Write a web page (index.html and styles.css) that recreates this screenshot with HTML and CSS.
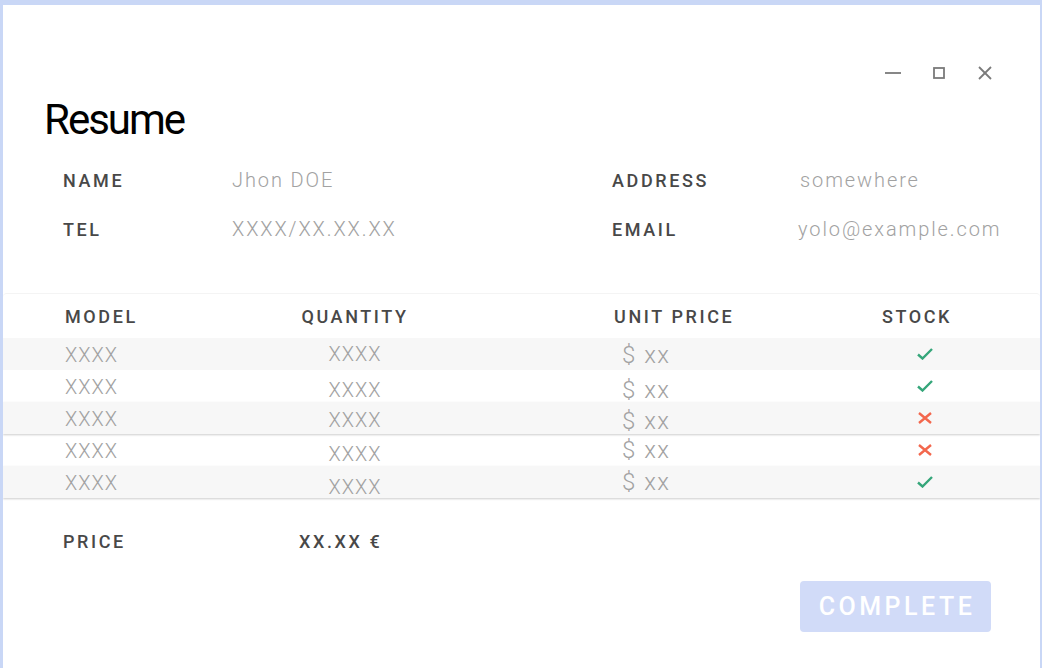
FILE: index.html
```html
<!DOCTYPE html>
<html lang="en">
<head>
  <meta charset="UTF-8">
  <meta name="viewport" content="width=device-width, initial-scale=1.0">
  <title>Resume</title>
  <link rel="stylesheet" href="styles.css">
</head>
<body>
  <div class="card">
    <!-- Window controls -->
    <div class="controls">
      <svg class="ctrl" viewBox="0 0 24 24"><line x1="4" y1="12" x2="20" y2="12" /></svg>
      <svg class="ctrl" viewBox="0 0 24 24"><rect x="7" y="7" width="10" height="10" /></svg>
      <svg class="ctrl" viewBox="0 0 24 24"><line x1="6" y1="6" x2="18" y2="18" /><line x1="18" y1="6" x2="6" y2="18" /></svg>
    </div>

    <h1 class="title">Resume</h1>

    <!-- Customer details -->
    <div class="info">
      <div class="info-row">
        <span class="label">NAME</span>
        <span class="value">Jhon DOE</span>
        <span class="label">ADDRESS</span>
        <span class="value">somewhere</span>
      </div>
      <div class="info-row">
        <span class="label">TEL</span>
        <span class="value">XXXX/XX.XX.XX</span>
        <span class="label">EMAIL</span>
        <span class="value email">yolo@example.com</span>
      </div>
    </div>

    <!-- Order table -->
    <div class="table">
      <div class="row head">
        <span class="label c-model">MODEL</span>
        <span class="label c-qty">QUANTITY</span>
        <span class="label c-price">UNIT PRICE</span>
        <span class="label c-stock">STOCK</span>
      </div>
      <div class="row grey">
        <span class="value c-model">XXXX</span>
        <span class="value c-qty">XXXX</span>
        <span class="value c-price sink-1">$ xx</span>
        <span class="c-stock"><svg class="ok" viewBox="0 0 16 12"><path d="M1 6.5 L5.5 10.5 L15 1" /></svg></span>
      </div>
      <div class="row">
        <span class="value c-model">XXXX</span>
        <span class="value c-qty sink-4">XXXX</span>
        <span class="value c-price sink-4">$ xx</span>
        <span class="c-stock"><svg class="ok" viewBox="0 0 16 12"><path d="M1 6.5 L5.5 10.5 L15 1" /></svg></span>
      </div>
      <div class="row grey shadow">
        <span class="value c-model">XXXX</span>
        <span class="value c-qty sink-2">XXXX</span>
        <span class="value c-price sink-3">$ xx</span>
        <span class="c-stock"><svg class="no" viewBox="0 0 16 12"><path d="M2 1 L14 11 M14 1 L2 11" /></svg></span>
      </div>
      <div class="row">
        <span class="value c-model">XXXX</span>
        <span class="value c-qty sink-4">XXXX</span>
        <span class="value c-price">$ xx</span>
        <span class="c-stock"><svg class="no" viewBox="0 0 16 12"><path d="M2 1 L14 11 M14 1 L2 11" /></svg></span>
      </div>
      <div class="row grey shadow">
        <span class="value c-model">XXXX</span>
        <span class="value c-qty sink-5">XXXX</span>
        <span class="value c-price">$ xx</span>
        <span class="c-stock"><svg class="ok" viewBox="0 0 16 12"><path d="M1 6.5 L5.5 10.5 L15 1" /></svg></span>
      </div>
    </div>

    <!-- Total -->
    <div class="total">
      <span class="label">PRICE</span>
      <span class="label">XX.XX €</span>
    </div>

    <div class="actions">
      <button class="complete">COMPLETE</button>
    </div>
  </div>
</body>
</html>
```

FILE: styles.css
```css
body {
  margin: 0;
  background-color: #c9d7f6;
  font-family: Roboto, "Liberation Sans", sans-serif;
}

.card {
  margin: 5px 2px 0 3px;
  min-height: calc(100vh - 5px);
  background-color: #ffffff;
  overflow: hidden;
}

.controls {
  display: flex;
  justify-content: flex-end;
  gap: 22px;
  padding: 56px 43px 0 0;
}

.ctrl {
  width: 24px;
  height: 24px;
  fill: none;
  stroke: #7a7a7a;
  stroke-width: 1.8;
}

.title {
  margin: 10px 0 0 41px;
  font-size: 42px;
  font-weight: 400;
  line-height: 50px;
  letter-spacing: -2px;
  color: #000;
}

.label {
  font-size: 18px;
  font-weight: 500;
  letter-spacing: 2.6px;
  color: #484848;
}

.value {
  font-size: 20px;
  font-weight: 300;
  letter-spacing: 1px;
  color: #a2a2a2;
}

.info {
  margin-top: 21px;
  padding-left: 60px;
}

.info-row {
  display: grid;
  grid-template-columns: 169px 380px 188px 1fr;
  align-items: baseline;
  line-height: 28px;
  margin-bottom: 20px;
}

.info-row .value {
  letter-spacing: 1.9px;
}

.email {
  margin-left: -2px;
}

.table {
  margin-top: 49px;
  border-top: 1px solid #f4f4f4;
  border-radius: 4px 4px 0 0;
}

.row {
  display: grid;
  grid-template-columns: 62px 165px 250px 360px 154px;
  height: 32px;
  line-height: 32px;
}

.row > span:first-child {
  grid-column: 2;
}

.head {
  height: 43px;
  line-height: 43px;
  padding-top: 1px;
}

.grey {
  background-color: #f7f7f7;
}

.shadow {
  position: relative;
  z-index: 1;
  box-shadow: 0 1px 2px rgba(0, 0, 0, 0.2);
}

.c-model {
  padding-top: 1px;
}

.head .c-model {
  padding-top: 0;
}

.c-qty {
  text-align: center;
}

.c-price {
  padding-left: 134px;
}

.value.c-price {
  padding-left: 142px;
  font-size: 24px;
  letter-spacing: 1.5px;
}

.c-stock {
  text-align: center;
}

.c-stock svg {
  width: 16px;
  height: 12px;
  margin-left: 16px;
  vertical-align: -1px;
  fill: none;
  stroke-width: 2.4;
}

.ok {
  stroke: #35a67a;
}

.no {
  stroke: #f3674d;
}

.sink-1 { padding-top: 1px; }
.sink-2 { padding-top: 2px; }
.sink-3 { padding-top: 3px; }
.sink-4 { padding-top: 4px; }
.sink-5 { padding-top: 5px; }

.total {
  display: grid;
  grid-template-columns: 236px 1fr;
  padding-left: 60px;
  margin-top: 32px;
  line-height: 24px;
}

.actions {
  display: flex;
  justify-content: flex-end;
  padding-right: 49px;
  margin-top: 27px;
}

.complete {
  width: 191px;
  height: 51px;
  padding: 0 0 0 3px;
  border: none;
  border-radius: 4px;
  background-color: #d1dbf8;
  color: #ffffff;
  font-family: Roboto, "Liberation Sans", sans-serif;
  font-size: 25px;
  font-weight: 500;
  letter-spacing: 3.5px;
  cursor: pointer;
}
```
